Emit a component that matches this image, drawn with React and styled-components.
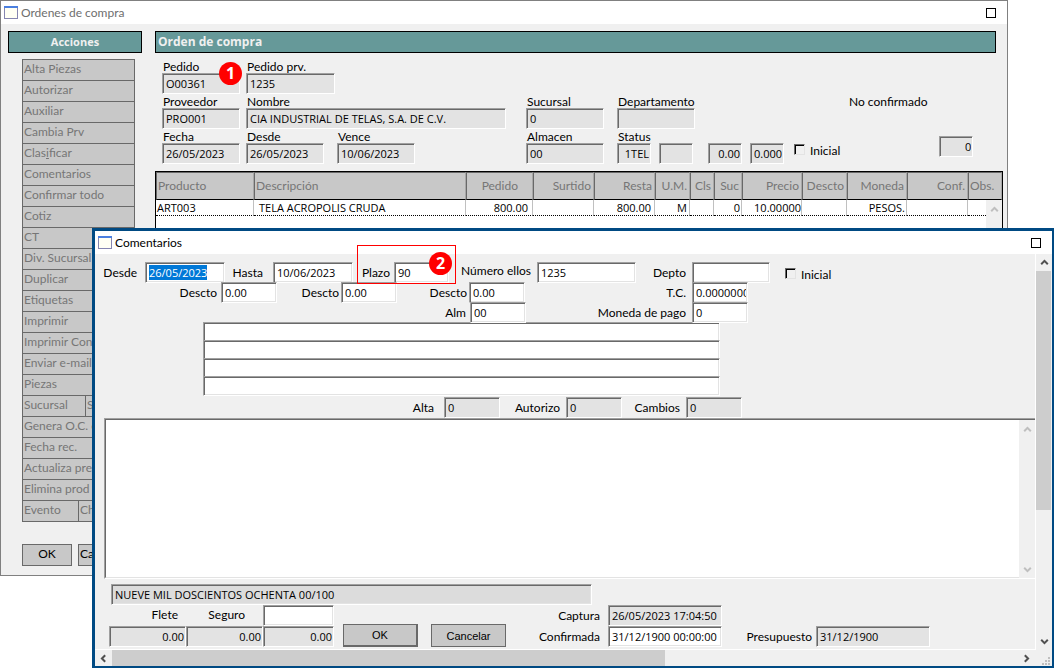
import React, { useEffect, useId, useRef } from "react";
import styled, { createGlobalStyle } from "styled-components";

const GlobalStyle = createGlobalStyle`
  * {
    box-sizing: border-box;
  }
  body {
    margin: 0;
    background: #fff;
    color: #000;
    font-family: Lato, "Open Sans", sans-serif;
    font-size: 12px;
    line-height: 14px;
  }
  button, input, textarea, table {
    font: inherit;
    color: inherit;
  }
`;

const Desktop = styled.div`
  position: relative;
  min-height: 668px;
`;

/* windows */

const MainWindow = styled.section`
  display: flex;
  flex-direction: column;
  margin-right: 46px;
  border: 1px solid #808080;
  background: #f0f0f0;
`;

const DialogWindow = styled.section`
  position: absolute;
  top: 228px;
  left: 92px;
  right: 0;
  border: 3px solid #004a83;
  border-right-width: 2px;
  background: #f0f0f0;
`;

const TitleBar = styled.header`
  display: flex;
  align-items: center;
  gap: 3px;
  height: 23px;
  padding: 0 11px 0 3px;
  background: #fff;
  color: ${(props) => (props.$active ? "#000" : "#6e6e6e")};
`;

const Title = styled.h1`
  flex: 1;
  margin: 0;
  font-size: 12px;
  font-weight: 400;
`;

const MaximizeButton = styled.button`
  width: 10px;
  height: 10px;
  padding: 0;
  border: 1px solid #000;
  background: #fff;
`;

const Banner = styled.h2`
  height: 22px;
  margin: 0 ${(props) => (props.$center ? 0 : 7)}px 0 0;
  padding: 0 2px;
  border: 1px solid #000;
  background: #669999;
  color: #f0f0f0;
  font-family: "Open Sans", sans-serif;
  font-size: ${(props) => (props.$center ? "11px" : "12px")};
  font-weight: 700;
  line-height: 20px;
  text-align: ${(props) => (props.$center ? "center" : "left")};
`;

const MainBody = styled.div`
  display: flex;
  gap: 13px;
  padding: 7px 4px 9px 7px;
`;

const Sidebar = styled.aside`
  flex: none;
  width: 134px;
`;

const ActionList = styled.nav`
  width: 113px;
  margin: 6px 0 23px 14px;
`;

const ActionRow = styled.div`
  display: flex;
  margin-bottom: -1px;
`;

const ActionButton = styled.button`
  flex: ${(props) => (props.$w ? "none" : "1")};
  width: ${(props) => (props.$w ? `${props.$w}px` : "auto")};
  height: 22px;
  margin-right: ${(props) => (props.$w ? "-1px" : "0")};
  padding: 0 1px 2px;
  border: 1px solid #696969;
  background: #c8c8c8;
  color: #767676;
  text-align: left;
  white-space: nowrap;
  overflow: hidden;
`;

const SidebarButtons = styled.div`
  display: flex;
  gap: 6px;
  margin-left: 14px;
`;

const SidebarButton = styled.button`
  width: 50px;
  height: 22px;
  padding: 0 1px 2px;
  border: 1px solid #696969;
  background: #c8c8c8;
  text-align: ${(props) => props.$align || "center"};
`;

const Content = styled.main`
  display: flex;
  flex: 1;
  flex-direction: column;
  min-width: 0;
`;

const HeaderForm = styled.form`
  padding: 6px 0 7px 7px;
`;

const FormRow = styled.div`
  display: flex;
  height: 35px;
`;

const FormCell = styled.div`
  position: relative;
  display: flex;
  flex: none;
  flex-direction: column;
  justify-content: ${(props) => (props.$raised ? "center" : "flex-end")};
  width: ${(props) => props.$w}px;
  margin-left: ${(props) => props.$gap || 0}px;
  white-space: nowrap;
`;

const FormLabel = styled.label`
  height: 14px;
  padding-left: 1px;
  line-height: 16px;
`;

const StatusText = styled.span`
  flex: none;
  width: 90px;
  margin-left: 154px;
  line-height: 16px;
`;

const Input = styled.input`
  display: block;
  flex: none;
  width: ${(props) => (props.$w ? `${props.$w}px` : "100%")};
  height: 21px;
  padding: 0 1px 0 3px;
  border: 1px solid;
  border-color: #a0a0a0 #fff #fff #a0a0a0;
  border-radius: 0;
  outline: none;
  background: ${(props) => (props.$gray ? "#e3e3e3" : "#fff")};
  box-shadow: inset 1px 1px #696969, inset -1px -1px #e3e3e3;
  font-family: "Open Sans", sans-serif;
  font-size: 11px;
  text-align: ${(props) => props.$align || "left"};

  &::selection {
    background: #0078d7;
    color: #fff;
  }
`;

const CheckLabel = styled.label`
  display: flex;
  align-items: center;
  gap: 5px;
  margin-left: ${(props) => props.$gap}px;
  padding-top: ${(props) => props.$top}px;
`;

const CheckBox = styled.input`
  appearance: none;
  width: 11px;
  height: 11px;
  margin: 0 0 2px;
  border: 1px solid;
  border-color: #696969 #e3e3e3 #e3e3e3 #696969;
  box-shadow: inset 1px 1px #000;
`;

const Badge = styled.span`
  position: absolute;
  top: ${(props) => props.$top}px;
  left: ${(props) => props.$left}px;
  width: 23px;
  height: 23px;
  border-radius: 50%;
  background: #ff0000;
  color: #fff;
  font-family: "Open Sans", sans-serif;
  font-size: 16px;
  font-weight: 700;
  line-height: 22px;
  text-align: center;
`;

/* order lines */

const TableBox = styled.div`
  position: relative;
  flex: 1;
  border: 1px solid #000;
  background: #fff;
`;

const Table = styled.table`
  width: 100%;
  table-layout: fixed;
  border-collapse: separate;
  border-spacing: 0;
  white-space: nowrap;
`;

const HeadCell = styled.th`
  width: ${(props) => (props.$w ? `${props.$w}px` : "auto")};
  height: 28px;
  padding: 0 ${(props) => props.$pad || 2}px 0 1px;
  border: 1px solid #696969;
  border-right-color: #a8a8a8;
  border-bottom: 1px solid #000;
  background: #c8c8c8;
  color: #767676;
  font-weight: 400;
  text-align: ${(props) => props.$align || "right"};
`;

const DataCell = styled.td`
  height: 16px;
  padding: 0 ${(props) => props.$pad || 0}px 0 ${(props) => props.$indent || 1}px;
  border-right: 1px solid #c0c0c0;
  border-bottom: 1px dotted #000;
  font-family: "Open Sans", sans-serif;
  font-size: 11px;
  text-align: ${(props) => props.$align || "right"};
`;

const ScrollTrack = styled.div`
  display: flex;
  flex: none;
  flex-direction: column;
  align-items: center;
  justify-content: space-between;
  width: 16px;
  padding: 5px 0 4px;
  background: #f0f0f0;
`;

const TableScroll = styled(ScrollTrack)`
  position: absolute;
  top: 28px;
  right: 0;
  bottom: 0;
`;

/* dialog */

const DialogMain = styled.div`
  display: flex;
`;

const Pane = styled.form`
  flex: 1;
  min-width: 0;
  padding: 8px 0 2px;
  border-right: 1px solid #fff;
  border-bottom: 1px solid #fff;
`;

const Line = styled.div`
  display: flex;
  height: ${(props) => props.$h || 20}px;
`;

const Cell = styled.div`
  position: relative;
  display: flex;
  flex: none;
`;

const CellLabel = styled.label`
  width: ${(props) => props.$w}px;
  padding-right: ${(props) => props.$pad}px;
  line-height: ${(props) => props.$lh}px;
  text-align: right;
  white-space: nowrap;
`;

const Highlight = styled.div`
  position: absolute;
  top: -17px;
  left: 4px;
  z-index: 1;
  width: 99px;
  height: 39px;
  border: 1px solid #ff0000;
  pointer-events: none;
`;

const NoteLines = styled.div`
  width: 517px;
  margin-left: 108px;
  padding-bottom: 3px;
`;

const NoteInput = styled(Input)`
  height: 20px;
  margin-bottom: -2px;
`;

const MemoBox = styled.div`
  display: flex;
  height: 161px;
  margin-left: 9px;
  border: 1px solid;
  border-color: #a0a0a0 #f0f0f0 #fff #a0a0a0;
  border-right: 0;
`;

const Memo = styled.textarea`
  flex: 1;
  padding: 3px;
  border: 1px solid;
  border-color: #696969 #fff #e3e3e3 #696969;
  border-right: 0;
  outline: none;
  resize: none;
  background: #fff;
`;

const MemoScroll = styled(ScrollTrack)`
  border-top: 1px solid #696969;
`;

const AmountInput = styled(Input)`
  width: 481px;
  margin: 5px 0 0 16px;
  background: #dcdcdc;
`;

const Footer = styled.div`
  display: flex;
  align-items: flex-end;
  padding-left: 14px;
`;

const Charges = styled.div`
  display: grid;
  grid-template-columns: 77px 77px 71px;
  grid-auto-rows: 21px;
`;

const ChargeLabel = styled.label`
  padding-right: ${(props) => props.$pad}px;
  line-height: 20px;
  text-align: right;
`;

const DialogButton = styled.button`
  width: 75px;
  height: 23px;
  margin-left: ${(props) => props.$gap}px;
  padding: 0;
  border: 1px solid #696969;
  border-width: ${(props) => (props.$default ? "1px 2px 2px 1px" : "1px")};
  background: #c8c8c8;
  font-family: "Liberation Sans", sans-serif;
  font-size: 11px;
`;

const HBar = styled.div`
  display: flex;
  align-items: center;
  height: 16px;
`;

const HTrack = styled.div`
  flex: 1;
  height: 16px;
`;

const HThumb = styled.div`
  width: 61%;
  height: 16px;
  background: #cdcdcd;
`;

const HArrow = styled.span`
  display: flex;
  justify-content: center;
  width: 17px;
`;

const VBar = styled.div`
  display: flex;
  flex-direction: column;
  align-items: center;
  width: 16px;
`;

const VArrow = styled.span`
  display: flex;
  align-items: center;
  height: 17px;
`;

const VTrack = styled.div`
  flex: 1;
  width: 16px;
`;

const VThumb = styled.div`
  height: 66%;
  margin-right: 1px;
  background: #cdcdcd;
`;

const WindowIcon = () => (
  <svg width="14" height="13" viewBox="0 0 14 13" shapeRendering="crispEdges">
    <rect x="0.5" y="0.5" width="13" height="12" fill="#fffff4" stroke="#8585b0" />
    <rect x="0" y="0" width="14" height="2" fill="#4a7fe0" />
  </svg>
);

const rotations = { up: 0, right: 90, down: 180, left: 270 };

const Chevron = ({ dir, color = "#505050" }) => (
  <svg width="9" height="9" viewBox="0 0 9 9">
    <path
      d="M1.2 6.2 L4.5 2.9 L7.8 6.2"
      transform={`rotate(${rotations[dir]} 4.5 4.5)`}
      fill="none"
      stroke={color}
      strokeWidth="2"
    />
  </svg>
);

const Grip = () => (
  <svg width="17" height="16" viewBox="0 0 17 16" fill="#bfbfbf" shapeRendering="crispEdges">
    <path d="M13 7h2v2h-2zM10 10h2v2h-2zM13 10h2v2h-2zM7 13h2v2h-2zM10 13h2v2h-2zM13 13h2v2h-2z" />
  </svg>
);

const actions = [
  ["Alta Piezas"],
  ["Autorizar"],
  ["Auxiliar"],
  ["Cambia Prv"],
  [<>Clas<u>i</u>ficar</>],
  ["Comentarios"],
  ["Confirmar todo"],
  ["Cotiz"],
  ["CT"],
  ["Div. Sucursal"],
  ["Duplicar"],
  ["Etiquetas"],
  ["Imprimir"],
  ["Imprimir Con"],
  ["Enviar e-mail"],
  ["Piezas"],
  ["Sucursal", "S", 64],
  ["Genera O.C. c"],
  ["Fecha rec."],
  ["Actualiza pre"],
  ["Elimina prod"],
  ["Evento", "Ch", 57],
];

const columns = [
  { title: "Producto", w: 98, align: "left", value: "ART003" },
  { title: "Descripción", align: "left", value: "TELA ACROPOLIS CRUDA", indent: 5 },
  { title: "Pedido", w: 67, headPad: 14, value: "800.00", pad: 4 },
  { title: "Surtido", w: 61, value: "" },
  { title: "Resta", w: 61, value: "800.00", pad: 3 },
  { title: "U.M.", w: 35, value: "M", pad: 2 },
  { title: "Cls", w: 24, value: "" },
  { title: "Suc", w: 28, value: "0", pad: 1 },
  { title: "Precio", w: 60, value: "10.00000" },
  { title: "Descto", w: 45, value: "" },
  { title: "Moneda", w: 60, value: "PESOS.", pad: 1 },
  { title: "Conf.", w: 61, value: "" },
  { title: "Obs.", w: 34, headAlign: "left", value: "" },
];

const FormField = ({ label, name, value, w, gap, align, raised, children }) => {
  const id = useId();
  return (
    <FormCell $w={w} $gap={gap} $raised={raised}>
      {label && <FormLabel htmlFor={id}>{label}</FormLabel>}
      <Input id={id} aria-label={label ? undefined : name} defaultValue={value} $gray $align={align} readOnly />
      {children}
    </FormCell>
  );
};

const Field = ({ label, value, labelWidth, w = 56, pad = 6, lh = 21, gray, inputRef, children }) => {
  const id = useId();
  return (
    <Cell>
      <CellLabel htmlFor={id} $w={labelWidth} $pad={pad} $lh={lh}>
        {label}
      </CellLabel>
      <Input id={id} ref={inputRef} defaultValue={value} $w={w} $gray={gray} readOnly={gray} />
      {children}
    </Cell>
  );
};

const OrderWindow = () => (
  <MainWindow>
    <TitleBar>
      <WindowIcon />
      <Title>Ordenes de compra</Title>
      <MaximizeButton type="button" aria-label="Maximizar" />
    </TitleBar>
    <MainBody>
      <Sidebar>
        <Banner $center>Acciones</Banner>
        <ActionList>
          {actions.map(([label, second, width], index) => (
            <ActionRow key={index}>
              <ActionButton type="button" $w={width}>{label}</ActionButton>
              {second && <ActionButton type="button">{second}</ActionButton>}
            </ActionRow>
          ))}
        </ActionList>
        <SidebarButtons>
          <SidebarButton type="button">OK</SidebarButton>
          <SidebarButton type="button" $align="left">Ca</SidebarButton>
        </SidebarButtons>
      </Sidebar>
      <Content>
        <Banner>Orden de compra</Banner>
        <HeaderForm>
          <FormRow>
            <FormField label="Pedido" value="O00361" w={78}>
              <Badge $top={3} $left={57}>1</Badge>
            </FormField>
            <FormField label="Pedido prv." value="1235" w={89} gap={6} />
          </FormRow>
          <FormRow>
            <FormField label="Proveedor" value="PRO001" w={78} />
            <FormField label="Nombre" value="CIA INDUSTRIAL DE TELAS, S.A. DE C.V." w={260} gap={6} />
            <FormField label="Sucursal" value="0" w={78} gap={20} />
            <FormField label="Departamento" value="" w={78} gap={13} />
            <StatusText>No confirmado</StatusText>
          </FormRow>
          <FormRow>
            <FormField label="Fecha" value="26/05/2023" w={78} />
            <FormField label="Desde" value="26/05/2023" w={78} gap={6} />
            <FormField label="Vence" value="10/06/2023" w={78} gap={13} />
            <FormField label="Almacen" value="00" w={78} gap={111} />
            <FormField label="Status" value="1TEL" w={34} gap={13} align="right" />
            <FormField name="Status 2" value="" w={34} gap={8} />
            <FormField name="Descuento" value="0.00" w={34} gap={15} align="right" />
            <FormField name="Tipo de cambio" value="0.000" w={34} gap={8} align="right" />
            <CheckLabel $gap={10} $top={8}>
              <CheckBox type="checkbox" />
              Inicial
            </CheckLabel>
            <FormField name="Total" value="0" w={34} gap={99} align="right" raised />
          </FormRow>
        </HeaderForm>
        <TableBox>
          <Table>
            <thead>
              <tr>
                {columns.map((col) => (
                  <HeadCell key={col.title} $w={col.w} $pad={col.headPad} $align={col.headAlign || col.align}>
                    {col.title}
                  </HeadCell>
                ))}
              </tr>
            </thead>
            <tbody>
              <tr>
                {columns.map((col) => (
                  <DataCell key={col.title} $align={col.align} $pad={col.pad} $indent={col.indent}>
                    {col.value}
                  </DataCell>
                ))}
              </tr>
            </tbody>
          </Table>
          <TableScroll>
            <Chevron dir="up" color="#bfbfbf" />
          </TableScroll>
        </TableBox>
      </Content>
    </MainBody>
  </MainWindow>
);

const CommentsWindow = () => {
  const dateRef = useRef(null);

  useEffect(() => {
    dateRef.current.focus();
    dateRef.current.select();
  }, []);

  return (
    <DialogWindow role="dialog" aria-label="Comentarios">
      <TitleBar $active>
        <WindowIcon />
        <Title>Comentarios</Title>
        <MaximizeButton type="button" aria-label="Maximizar" />
      </TitleBar>
      <DialogMain>
        <Pane>
          <Line>
            <Field label="Desde" value="26/05/2023" labelWidth={50} w={80} pad={8} inputRef={dateRef} />
            <Field label="Hasta" value="10/06/2023" labelWidth={48} w={80} pad={10} />
            <Field label="Plazo" value="90" labelWidth={41} w={55} pad={4}>
              <Highlight>
                <Badge $top={6} $left={71}>2</Badge>
              </Highlight>
            </Field>
            <Field label="Número ellos" value="1235" labelWidth={88} w={99} lh={18} />
            <Field label="Depto" value="" labelWidth={56} w={78} />
            <CheckLabel $gap={15} $top={5}>
              <CheckBox type="checkbox" />
              Inicial
            </CheckLabel>
          </Line>
          <Line>
            <Field label="Descto" value="0.00" labelWidth={126} pad={4} />
            <Field label="Descto" value="0.00" labelWidth={64} pad={2} />
            <Field label="Descto" value="0.00" labelWidth={72} pad={2} />
            <Field label="T.C." value="0.00000000" labelWidth={167} />
          </Line>
          <Line>
            <Field label="Alm" value="00" labelWidth={375} pad={4} />
            <Field label="Moneda de pago" value="0" labelWidth={166} />
          </Line>
          <NoteLines>
            {[1, 2, 3, 4].map((n) => (
              <NoteInput key={n} aria-label={`Nota ${n}`} />
            ))}
          </NoteLines>
          <Line $h={21}>
            <Field label="Alta" value="0" labelWidth={349} pad={10} gray />
            <Field label="Autorizo" value="0" labelWidth={66} gray />
            <Field label="Cambios" value="0" labelWidth={64} gray />
          </Line>
          <MemoBox>
            <Memo aria-label="Comentario" />
            <MemoScroll>
              <Chevron dir="up" color="#bfbfbf" />
              <Chevron dir="down" color="#bfbfbf" />
            </MemoScroll>
          </MemoBox>
          <AmountInput aria-label="Importe con letra" defaultValue="NUEVE MIL DOSCIENTOS OCHENTA 00/100" readOnly />
          <Footer>
            <Charges>
              <ChargeLabel htmlFor="flete" $pad={8}>Flete</ChargeLabel>
              <ChargeLabel htmlFor="seguro" $pad={18}>Seguro</ChargeLabel>
              <Input aria-label="Otro cargo" />
              <Input id="flete" defaultValue="0.00" $gray $align="right" readOnly />
              <Input id="seguro" defaultValue="0.00" $gray $align="right" readOnly />
              <Input aria-label="Importe del cargo" defaultValue="0.00" $gray $align="right" readOnly />
            </Charges>
            <DialogButton type="button" $gap={9} $default>OK</DialogButton>
            <DialogButton type="button" $gap={13}>Cancelar</DialogButton>
            <div>
              <Field label="Captura" value="26/05/2023 17:04:50" labelWidth={102} w={114} pad={8} gray />
              <Field label="Confirmada" value="31/12/1900 00:00:00" labelWidth={102} w={114} pad={8} />
            </div>
            <Field label="Presupuesto" value="31/12/1900" labelWidth={94} w={114} pad={4} gray />
          </Footer>
        </Pane>
        <VBar>
          <VArrow><Chevron dir="up" /></VArrow>
          <VTrack><VThumb /></VTrack>
          <VArrow><Chevron dir="down" /></VArrow>
        </VBar>
      </DialogMain>
      <HBar>
        <HArrow><Chevron dir="left" /></HArrow>
        <HTrack><HThumb /></HTrack>
        <HArrow><Chevron dir="right" /></HArrow>
        <Grip />
      </HBar>
    </DialogWindow>
  );
};

const App = () => (
  <Desktop>
    <GlobalStyle />
    <OrderWindow />
    <CommentsWindow />
  </Desktop>
);

export default App;
